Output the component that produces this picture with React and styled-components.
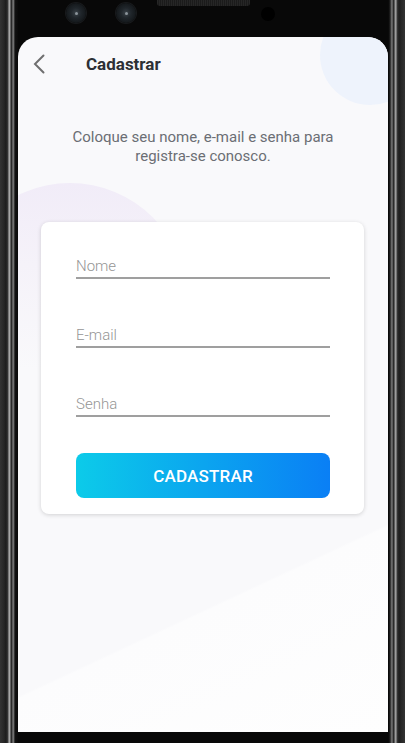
import styled, { createGlobalStyle } from "styled-components";

const GlobalStyle = createGlobalStyle`
  html, body {
    margin: 0;
    padding: 0;
    background: #0a0a0a;
  }
  * {
    box-sizing: border-box;
  }
`;

const leftBezel = `linear-gradient(to right,
  #333 0px, #262626 4px, #1c1c1c 6px, #3a3a3a 8px, #b4b4b4 9px, #9a9a9a 10px,
  #2a2a2a 11px, #2a2a2a 12px, #8c8c8c 13px, #555 14px, #111 15px, #0a0a0a 18px)`;

const rightBezel = `linear-gradient(to left,
  #333 0px, #262626 4px, #1c1c1c 6px, #3a3a3a 8px, #a8a8a8 9px, #8f8f8f 10px,
  #2a2a2a 11px, #2a2a2a 12px, #8c8c8c 13px, #444 14px, #0a0a0a 16px)`;

const Phone = styled.div`
  width: 405px;
  height: 743px;
  display: flex;
  flex-direction: column;
  padding: 0 17px 11px 18px;
  background: ${leftBezel} left top / 18px 100% no-repeat,
    ${rightBezel} right top / 17px 100% no-repeat, #080808;
  overflow: hidden;
`;

const Notch = styled.div`
  height: 37px;
  display: flex;
  align-items: flex-start;
  flex-shrink: 0;
`;

const Camera = styled.div`
  width: 20px;
  height: 20px;
  margin: 3px 0 0 ${(p) => p.$gap}px;
  border-radius: 50%;
  background: radial-gradient(circle at 50% 50%, #3a4248 0, #20262b 35%, #14181b 70%, #0e0f10 100%);
  box-shadow: 0 0 0 1px #181a1c;
  display: flex;
  align-items: center;
  justify-content: center;
  &::after {
    content: "";
    width: 3px;
    height: 3px;
    border-radius: 50%;
    background: #8b949a;
  }
`;

const Speaker = styled.div`
  width: 93px;
  height: 6px;
  margin-left: 21px;
  border-radius: 0 0 3px 3px;
  background: repeating-linear-gradient(90deg, #262626 0, #262626 1px, #1b1b1b 1px, #1b1b1b 2px);
`;

const Sensor = styled.div`
  width: 14px;
  height: 14px;
  margin: 7px 0 0 11px;
  border-radius: 50%;
  background: #000;
`;

const Screen = styled.div`
  flex: 1;
  position: relative;
  overflow: hidden;
  border-radius: 20px 20px 0 0;
  background: linear-gradient(155deg, #f9f9fb 0%, #f9f9fb 76%, #fcfcfd 76.3%, #fefefe 100%);
  display: flex;
  flex-direction: column;
`;

const Bubble = styled.div`
  position: absolute;
  left: 302px;
  top: -32px;
  width: 100px;
  height: 100px;
  border-radius: 50%;
  background: #eef3fc;
`;

const Blob = styled.div`
  position: absolute;
  left: -65px;
  top: 146px;
  width: 234px;
  height: 234px;
  border-radius: 50%;
  background: linear-gradient(to bottom, #f1ecf8 0%, #f5f2f9 35%, rgba(249, 249, 251, 0) 80%);
`;

const Header = styled.header`
  position: relative;
  height: 54px;
  display: flex;
  align-items: center;
  padding-left: 15px;
`;

const BackButton = styled.button`
  border: 0;
  background: none;
  padding: 0;
  width: 12px;
  height: 20px;
  display: flex;
  cursor: pointer;
`;

const Title = styled.h1`
  margin: 0 0 0 41px;
  font-family: Roboto, "Liberation Sans", sans-serif;
  font-size: 17px;
  font-weight: 700;
  color: #2d3035;
`;

const Subtitle = styled.p`
  position: relative;
  margin: 37px 0 0;
  padding: 0 40px;
  text-align: center;
  font-family: Roboto, "Liberation Sans", sans-serif;
  font-size: 15px;
  line-height: 19px;
  color: #6b6e74;
`;

const Card = styled.form`
  position: relative;
  margin: 56px 24px 0 23px;
  padding: 32px 34px 16px 35px;
  background: #fff;
  border-radius: 8px;
  box-shadow: 0 1px 4px rgba(0, 0, 0, 0.16);
  display: flex;
  flex-direction: column;
  gap: 44px;
`;

const Input = styled.input`
  height: 25px;
  padding: 0;
  border: 0;
  border-bottom: 2px solid #9f9f9f;
  background: transparent;
  outline: none;
  font-family: Roboto, "Liberation Sans", sans-serif;
  font-size: 15px;
  font-weight: 300;
  color: #333;
  &::placeholder {
    color: #959595;
  }
`;

const Button = styled.button`
  margin-top: -8px;
  height: 45px;
  border: 0;
  border-radius: 8px;
  background: linear-gradient(to right, #0ccbe9, #0a7ff5);
  color: #fff;
  font-family: Roboto, "Liberation Sans", sans-serif;
  font-size: 17px;
  font-weight: 500;
  letter-spacing: 0.2px;
  cursor: pointer;
`;

const App = () => {
  return (
    <>
      <GlobalStyle />
      <Phone>
        <Notch>
          <Camera $gap={48} />
          <Camera $gap={30} />
          <Speaker />
          <Sensor />
        </Notch>
        <Screen>
          <Bubble />
          <Blob />
          <Header>
            <BackButton type="button" aria-label="Voltar">
              <svg width="12" height="20" viewBox="0 0 12 20">
                <path d="M10.5 1.5 2 10l8.5 8.5" fill="none" stroke="#6f6f6f" strokeWidth="2" strokeLinecap="round" />
              </svg>
            </BackButton>
            <Title>Cadastrar</Title>
          </Header>
          <Subtitle>
            Coloque seu nome, e-mail e senha para
            <br />
            registra-se conosco.
          </Subtitle>
          <Card onSubmit={(e) => e.preventDefault()}>
            <Input placeholder="Nome" />
            <Input placeholder="E-mail" type="email" />
            <Input placeholder="Senha" type="password" />
            <Button type="submit">CADASTRAR</Button>
          </Card>
        </Screen>
      </Phone>
    </>
  );
};

export default App;
